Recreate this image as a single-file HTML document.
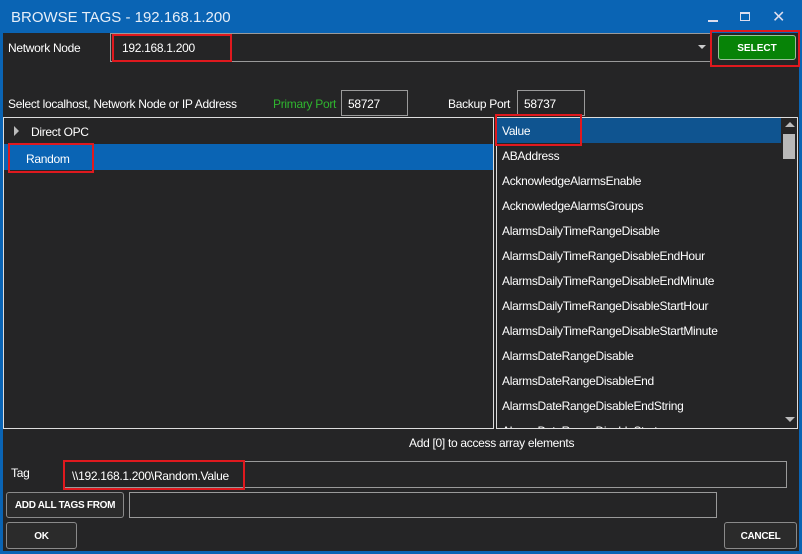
<!DOCTYPE html>
<html><head><meta charset="utf-8"><style>
*{margin:0;padding:0;box-sizing:border-box}
body{width:802px;height:554px;background:#0a64b4;font-family:"Liberation Sans",sans-serif;font-size:12px;color:#fff;position:relative;overflow:hidden}
.a{position:absolute}
.main{left:3px;top:33px;width:796px;height:518px;background:#252526}
.t{white-space:nowrap;letter-spacing:-0.3px}
.box{border:1px solid #9a9a9a;background:#252526}
.red{border:2px solid #e0191e}
.btn{border:1px solid #8a8a8a;border-radius:3px;background:#2b2b2b;font-weight:bold;font-size:10px;text-align:center;letter-spacing:-0.3px}
.row{left:498px;width:283px;height:25px;line-height:27px;padding-left:4px;white-space:nowrap;letter-spacing:-0.3px;overflow:hidden}
</style></head><body>
<div class="a t" style="left:11px;top:9px;font-size:15px;color:#e6eef8;letter-spacing:0">BROWSE TAGS - 192.168.1.200</div>
<div class="a" style="left:708px;top:20px;width:10px;height:2px;background:#dde"></div>
<div class="a" style="left:740px;top:12px;width:10px;height:9px;border:1px solid #dde;border-top-width:2px"></div>
<div class="a t" style="left:772px;top:7px;font-size:16px;color:#dde">✕</div>
<div class="a main"></div>
<div class="a t" style="left:8px;top:41px">Network Node</div>
<div class="a box" style="left:110px;top:33px;width:601px;height:29px"></div>
<div class="a red" style="left:112px;top:34px;width:120px;height:28px"></div>
<div class="a t" style="left:122px;top:41px">192.168.1.200</div>
<div class="a" style="left:698px;top:45px;border-left:4px solid transparent;border-right:4px solid transparent;border-top:4px solid #ccc"></div>
<div class="a red" style="left:710px;top:30px;width:90px;height:37px"></div>
<div class="a" style="left:718px;top:35px;width:78px;height:25px;background:#078307;border:1px solid #9ac09a;border-radius:3px;font-weight:bold;font-size:10px;text-align:center;line-height:25px">SELECT</div>
<div class="a t" style="left:8px;top:97px">Select localhost, Network Node or IP Address</div>
<div class="a t" style="left:273px;top:97px;color:#2fb52f">Primary Port</div>
<div class="a box" style="left:341px;top:90px;width:67px;height:26px"></div>
<div class="a t" style="left:348px;top:97px">58727</div>
<div class="a t" style="left:448px;top:97px">Backup Port</div>
<div class="a box" style="left:517px;top:90px;width:68px;height:26px"></div>
<div class="a t" style="left:524px;top:97px">58737</div>
<div class="a" style="left:3px;top:117px;width:491px;height:312px;border:1px solid #ddd"></div>
<div class="a" style="left:14px;top:126px;border-top:5px solid transparent;border-bottom:5px solid transparent;border-left:5px solid #bbb"></div>
<div class="a t" style="left:31px;top:125px">Direct OPC</div>
<div class="a" style="left:4px;top:144px;width:489px;height:26px;background:#0a64b4"></div>
<div class="a red" style="left:8px;top:143px;width:86px;height:30px"></div>
<div class="a t" style="left:26px;top:152px">Random</div>
<div class="a" style="left:496px;top:117px;width:302px;height:312px;border:1px solid #ddd"></div>
<div class="a" style="left:497px;top:118px;width:284px;height:25px;background:#0f5490"></div>
<div class="a red" style="left:495px;top:114px;width:87px;height:32px"></div>
<div class="a row" style="top:118px">Value</div>
<div class="a row" style="top:143px">ABAddress</div>
<div class="a row" style="top:168px">AcknowledgeAlarmsEnable</div>
<div class="a row" style="top:193px">AcknowledgeAlarmsGroups</div>
<div class="a row" style="top:218px">AlarmsDailyTimeRangeDisable</div>
<div class="a row" style="top:243px">AlarmsDailyTimeRangeDisableEndHour</div>
<div class="a row" style="top:268px">AlarmsDailyTimeRangeDisableEndMinute</div>
<div class="a row" style="top:293px">AlarmsDailyTimeRangeDisableStartHour</div>
<div class="a row" style="top:318px">AlarmsDailyTimeRangeDisableStartMinute</div>
<div class="a row" style="top:343px">AlarmsDateRangeDisable</div>
<div class="a row" style="top:368px">AlarmsDateRangeDisableEnd</div>
<div class="a row" style="top:393px">AlarmsDateRangeDisableEndString</div>
<div class="a row" style="top:418px;height:10px">AlarmsDateRangeDisableStart</div>
<div class="a" style="left:782px;top:118px;width:15px;height:310px;background:#252526"></div>
<div class="a" style="left:785px;top:122px;border-left:5px solid transparent;border-right:5px solid transparent;border-bottom:5px solid #bbb"></div>
<div class="a" style="left:783px;top:134px;width:12px;height:25px;background:#b9b9b9"></div>
<div class="a" style="left:785px;top:417px;border-left:5px solid transparent;border-right:5px solid transparent;border-top:5px solid #bbb"></div>
<div class="a t" style="left:409px;top:436px">Add [0] to access array elements</div>
<div class="a t" style="left:11px;top:466px">Tag</div>
<div class="a box" style="left:63px;top:461px;width:724px;height:27px"></div>
<div class="a red" style="left:63px;top:460px;width:182px;height:30px"></div>
<div class="a t" style="left:72px;top:469px">\\192.168.1.200\Random.Value</div>
<div class="a btn" style="left:6px;top:492px;width:118px;height:26px;line-height:26px">ADD ALL TAGS FROM</div>
<div class="a box" style="left:129px;top:492px;width:588px;height:26px"></div>
<div class="a btn" style="left:6px;top:522px;width:71px;height:27px;line-height:27px">OK</div>
<div class="a btn" style="left:724px;top:522px;width:73px;height:27px;line-height:27px">CANCEL</div>
</body></html>
